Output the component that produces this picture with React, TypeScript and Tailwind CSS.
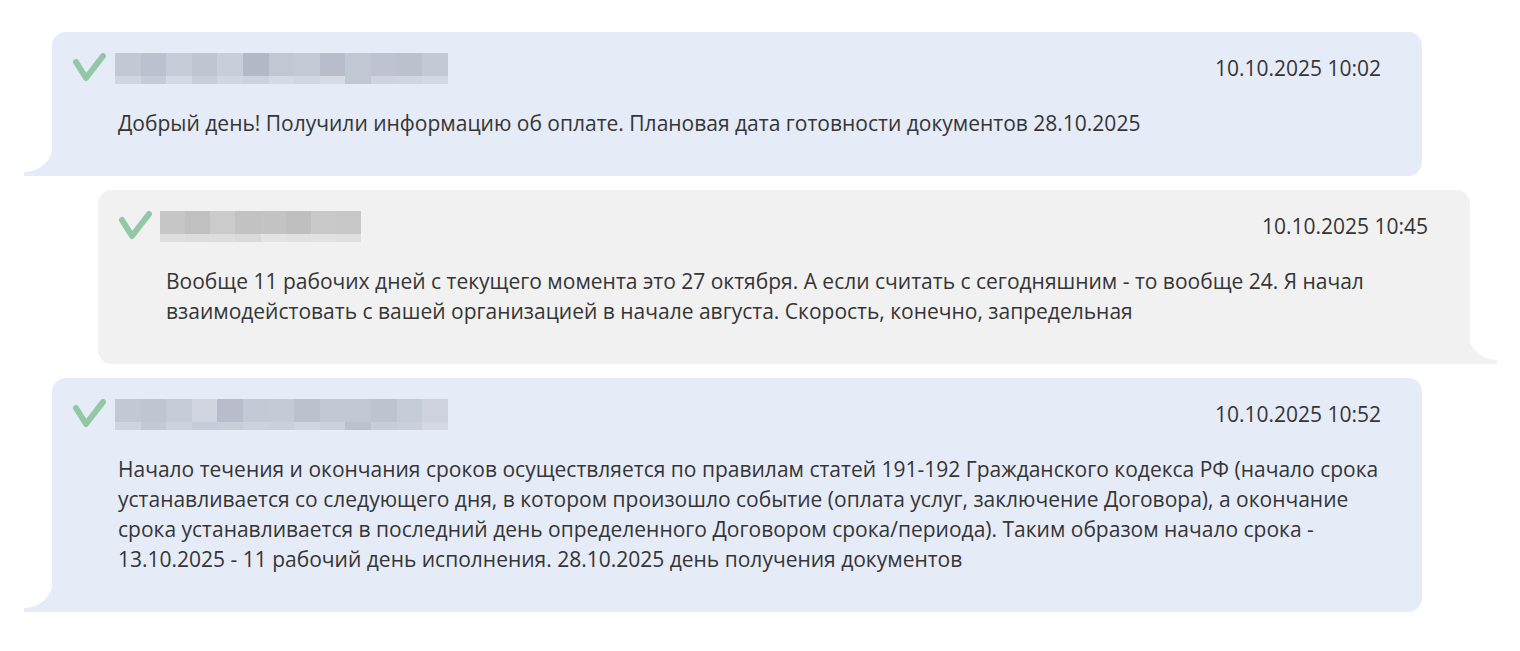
import React from "react";

const FONT = { fontFamily: '"Open Sans", "Noto Sans", sans-serif' };

function Check() {
  return (
    <svg width="34" height="30" viewBox="0 0 34 30" className="shrink-0">
      <path
        d="M4 9 L14 25 L31 3"
        fill="none"
        stroke="#93c8a5"
        strokeWidth="6"
        strokeLinecap="round"
        strokeLinejoin="round"
      />
    </svg>
  );
}

function Blur({ top, bottom, w }: { top: string[]; bottom: string[]; w: number }) {
  return (
    <div className="flex flex-col" style={{ width: w }}>
      <div className="flex h-[23px]">
        {top.map((c, i) => (
          <div key={i} className="flex-1" style={{ background: c }} />
        ))}
      </div>
      <div className="flex h-[8px]">
        {bottom.map((c, i) => (
          <div key={i} className="flex-1" style={{ background: c }} />
        ))}
      </div>
    </div>
  );
}

const blueTop = ["#c3c8d5", "#bcc1cf", "#c7ccd9", "#c0c5d2", "#c9cedb", "#b4b9c7", "#c2c7d4", "#c5cad7", "#b9bdcb", "#c2c7d4", "#bfc3d1", "#bcc1ce", "#c4c9d6"];
const blueBot = ["#d0d5e1", "#c6cbd8", "#d4d9e5", "#c9cedb", "#d1d6e2", "#cdd2de", "#d5dae6", "#d2d7e3", "#d6dbe6", "#c2c7d4", "#cfd4e0", "#d0d5e1", "#d3d8e4"];
const blueTop3 = ["#c3c8d5", "#c0c5d2", "#c6cbd8", "#d0d5e1", "#b9bdcb", "#c4c9d6", "#c5cad7", "#bcc1ce", "#c3c8d5", "#c2c7d4", "#bec3d0", "#c6cbd8", "#cdd2de"];
const blueBot3 = ["#cfd4e0", "#c4c9d6", "#cdd2de", "#c7ccd9", "#c9cedb", "#cdd2de", "#cbd0dc", "#d0d5e1", "#ccd1dd", "#bcc1ce", "#c8cdda", "#cbd0dc", "#d3d8e4"];
const grayTop = ["#c6c6c6", "#c0c0c0", "#cbcbcb", "#c2c2c2", "#c4c4c4", "#bfbfbf", "#c9c9c9", "#c7c7c7"];
const grayBot = ["#dedede", "#dcdcdc", "#dddddd", "#d9d9d9", "#e3e3e3", "#e1e1e1", "#e2e2e2", "#dfdfdf"];

function TailLeft({ color }: { color: string }) {
  return (
    <svg width="30" height="32" viewBox="0 0 30 32" className="absolute bottom-0 -left-[28px]">
      <path d="M29 0 A28 28 0 0 1 1 28 Q0 28 0 30 L0 32 L29 32 Z" fill={color} />
    </svg>
  );
}

function TailRight({ color }: { color: string }) {
  return (
    <svg width="30" height="32" viewBox="0 0 30 32" className="absolute bottom-0 -right-[27px]">
      <path d="M1 0 A28 28 0 0 0 29 28 Q30 28 30 30 L30 32 L1 32 Z" fill={color} />
    </svg>
  );
}

export default function App() {
  return (
    <div className="w-[1520px] h-[651px] bg-white overflow-hidden text-[#353535]" style={FONT}>
      <div className="flex flex-col gap-[14px] pt-[32px]">
        {/* Bubble 1 */}
        <div className="relative ml-[52px] w-[1370px] rounded-[14px] rounded-bl-none bg-[#e6ebf8] pt-[21px] pb-[38px]">
          <TailLeft color="#e6ebf8" />
          <div className="flex items-center h-[30px] pl-[20px] pr-[41px]">
            <Check />
            <div className="ml-[9px]">
              <Blur top={blueTop} bottom={blueBot} w={333} />
            </div>
            <div className="ml-auto text-[21px] leading-[30px]">10.10.2025 10:02</div>
          </div>
          <div className="mt-[25px] pl-[66px] text-[21px] leading-[30px]">
            <div className="whitespace-nowrap">Добрый день! Получили информацию об оплате. Плановая дата готовности документов 28.10.2025</div>
          </div>
        </div>

        {/* Bubble 2 */}
        <div className="relative ml-[98px] w-[1372px] rounded-[14px] rounded-br-none bg-[#f1f1f1] pt-[21px] pb-[38px]">
          <TailRight color="#f1f1f1" />
          <div className="flex items-center h-[30px] pl-[20px] pr-[42px]">
            <Check />
            <div className="ml-[8px]">
              <Blur top={grayTop} bottom={grayBot} w={201} />
            </div>
            <div className="ml-auto text-[21px] leading-[30px]">10.10.2025 10:45</div>
          </div>
          <div className="mt-[25px] pl-[68px] text-[21px] leading-[30px]">
            <div className="whitespace-nowrap">Вообще 11 рабочих дней с текущего момента это 27 октября. А если считать с сегодняшним - то вообще 24. Я начал</div>
            <div className="whitespace-nowrap">взаимодейстовать с вашей организацией в начале августа. Скорость, конечно, запредельная</div>
          </div>
        </div>

        {/* Bubble 3 */}
        <div className="relative ml-[52px] w-[1370px] rounded-[14px] rounded-bl-none bg-[#e6ebf8] pt-[21px] pb-[38px]">
          <TailLeft color="#e6ebf8" />
          <div className="flex items-center h-[30px] pl-[20px] pr-[41px]">
            <Check />
            <div className="ml-[9px]">
              <Blur top={blueTop3} bottom={blueBot3} w={333} />
            </div>
            <div className="ml-auto text-[21px] leading-[30px]">10.10.2025 10:52</div>
          </div>
          <div className="mt-[25px] pl-[66px] text-[21px] leading-[30px]">
            <div className="whitespace-nowrap">Начало течения и окончания сроков осуществляется по правилам статей 191-192 Гражданского кодекса РФ (начало срока</div>
            <div className="whitespace-nowrap">устанавливается со следующего дня, в котором произошло событие (оплата услуг, заключение Договора), а окончание</div>
            <div className="whitespace-nowrap">срока устанавливается в последний день определенного Договором срока/периода). Таким образом начало срока -</div>
            <div className="whitespace-nowrap">13.10.2025 - 11 рабочий день исполнения. 28.10.2025 день получения документов</div>
          </div>
        </div>
      </div>
    </div>
  );
}
